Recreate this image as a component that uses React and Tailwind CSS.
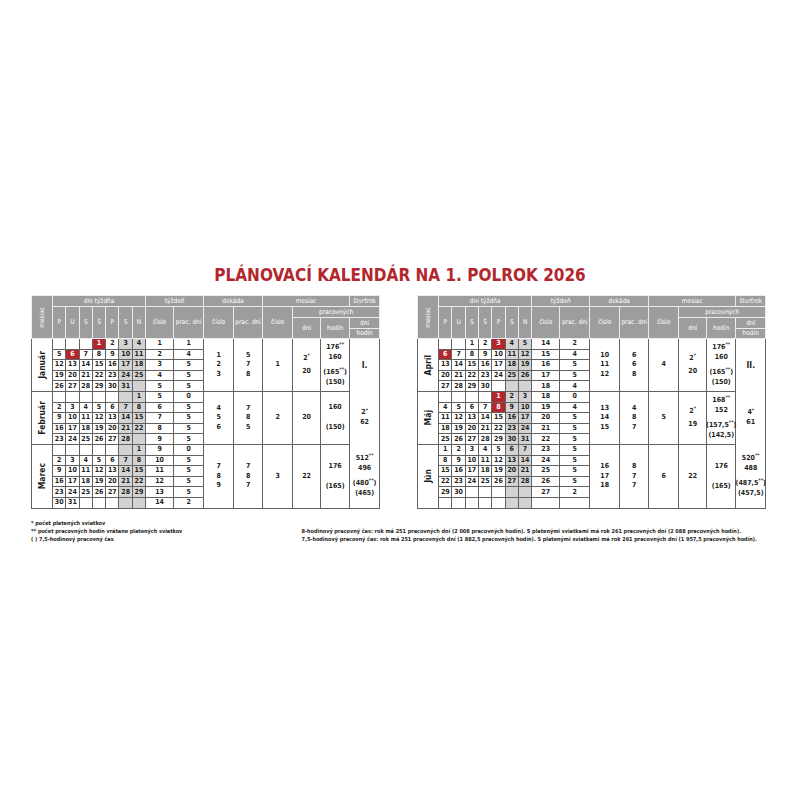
const FONT = "font-['Liberation_Sans_Narrow','DejaVu_Sans_Condensed','Liberation_Sans',sans-serif]";

const LEFT = [
  {
    name: 'Január', first: 3, days: 31, holidays: [1, 6], extra: false,
    weeks: [[1, 1], [2, 4], [3, 5], [4, 5], [5, 5]],
    dek: ['1', '2', '3'], dekDni: ['5', '7', '8'], cislo: '1',
    dni: ['2*', '20'], hodin: ['176**', '160', '', '(165**)', '(150)'], q: ['I.'], qBig: true,
  },
  {
    name: 'Február', first: 6, days: 28, holidays: [], extra: false,
    weeks: [[5, 0], [6, 5], [7, 5], [8, 5], [9, 5]],
    dek: ['4', '5', '6'], dekDni: ['7', '8', '5'], cislo: '2',
    dni: ['20'], hodin: ['160', '', '', '(150)'], q: ['2*', '62'],
  },
  {
    name: 'Marec', first: 6, days: 31, holidays: [], extra: false,
    weeks: [[9, 0], [10, 5], [11, 5], [12, 5], [13, 5], [14, 2]],
    dek: ['7', '8', '9'], dekDni: ['7', '8', '7'], cislo: '3',
    dni: ['22'], hodin: ['176', '', '', '(165)'], q: ['512**', '496', '', '(480**)', '(465)'],
  },
];

const RIGHT = [
  {
    name: 'Apríl', first: 2, days: 30, holidays: [3, 6], extra: false,
    weeks: [[14, 2], [15, 4], [16, 5], [17, 5], [18, 4]],
    dek: ['10', '11', '12'], dekDni: ['6', '6', '8'], cislo: '4',
    dni: ['2*', '20'], hodin: ['176**', '160', '', '(165**)', '(150)'], q: ['II.'], qBig: true,
  },
  {
    name: 'Máj', first: 4, days: 31, holidays: [1, 8], extra: false,
    weeks: [[18, 0], [19, 4], [20, 5], [21, 5], [22, 5]],
    dek: ['13', '14', '15'], dekDni: ['4', '8', '7'], cislo: '5',
    dni: ['2*', '19'], hodin: ['168**', '152', '', '(157,5**)', '(142,5)'], q: ['4*', '61'],
  },
  {
    name: 'Jún', first: 0, days: 30, holidays: [], extra: true,
    weeks: [[23, 5], [24, 5], [25, 5], [26, 5], [27, 2], ['', '']],
    dek: ['16', '17', '18'], dekDni: ['8', '7', '7'], cislo: '6',
    dni: ['22'], hodin: ['176', '', '', '(165)'], q: ['520**', '488', '', '(487,5**)', '(457,5)'],
  },
];

function Sup({ text }) {
  const m = text.match(/^(.*?)(\*+)(.*)$/);
  if (!m) return <>{text}</>;
  return (
    <>
      {m[1]}
      <span className="relative -top-[2.5px] text-[5px]">{m[2]}</span>
      {m[3]}
    </>
  );
}

function Lines({ items, lh = 'h-[10px]' }) {
  return (
    <div className="flex flex-col items-center">
      {items.map((t, i) =>
        t === '' ? (
          <div key={i} className="h-[5px]" />
        ) : (
          <div key={i} className={`${lh} flex items-center justify-center whitespace-nowrap`}>
            <Sup text={t} />
          </div>
        )
      )}
    </div>
  );
}

function buildRows(m) {
  const rows = [];
  let row = Array(7).fill(null);
  let col = m.first;
  for (let d = 1; d <= m.days; d++) {
    row[col] = d;
    col++;
    if (col === 7) {
      rows.push(row);
      row = Array(7).fill(null);
      col = 0;
    }
  }
  if (col > 0) rows.push(row);
  if (m.extra) rows.push(Array(7).fill(null));
  return rows;
}

const th = 'border border-[#ececec] bg-[#9d9d9d] p-0 font-normal text-white text-[6.5px] leading-none';
const td = 'border border-[#626262] p-0';

function Header() {
  return (
    <thead>
      <tr className="h-[11px]">
        <th rowSpan={4} className={th}>
          <div className="flex items-center justify-center">
            <span className="rotate-180 [writing-mode:vertical-rl]">mesiac</span>
          </div>
        </th>
        <th colSpan={7} className={th}>dni týždňa</th>
        <th colSpan={2} className={th}>týždeň</th>
        <th colSpan={2} className={th}>dekáda</th>
        <th colSpan={3} className={th}>mesiac</th>
        <th className={th}>štvrťrok</th>
      </tr>
      <tr className="h-[11px]">
        {['P', 'U', 'S', 'Š', 'P', 'S', 'N'].map((d, i) => (
          <th key={i} rowSpan={3} className={th}>{d}</th>
        ))}
        <th rowSpan={3} className={th}>číslo</th>
        <th rowSpan={3} className={th}>prac. dni</th>
        <th rowSpan={3} className={th}>číslo</th>
        <th rowSpan={3} className={th}>prac. dni</th>
        <th rowSpan={3} className={th}>číslo</th>
        <th colSpan={3} className={th}>pracovných</th>
      </tr>
      <tr className="h-[10.5px]">
        <th rowSpan={2} className={th}>dní</th>
        <th rowSpan={2} className={th}>hodín</th>
        <th className={th}>dní</th>
      </tr>
      <tr className="h-[10.5px]">
        <th className={th}>hodín</th>
      </tr>
    </thead>
  );
}

function MonthRows({ m, pos }) {
  const rows = buildRows(m);
  const n = rows.length;
  const qBorder = pos === 0 ? 'border-b-0' : pos === 1 ? 'border-y-0' : 'border-t-0';
  return rows.map((row, r) => (
    <tr key={r} className="h-[10.6px]">
      {r === 0 && (
        <td rowSpan={n} className={td}>
          <div className="flex items-center justify-center">
            <span className="rotate-180 text-[8.5px] [writing-mode:vertical-rl]">{m.name}</span>
          </div>
        </td>
      )}
      {row.map((d, c) => {
        const hol = d && m.holidays.includes(d);
        const bg = hol ? 'bg-[#b3262c] text-white' : c >= 5 ? 'bg-[#d3d3d3]' : 'bg-white';
        return (
          <td key={c} className={`${td} ${bg}`}>
            {d ?? ''}
          </td>
        );
      })}
      <td className={td}>{m.weeks[r][0]}</td>
      <td className={td}>{m.weeks[r][1]}</td>
      {r === 0 && (
        <>
          <td rowSpan={n} className={td}><Lines items={m.dek} lh="h-[9.5px]" /></td>
          <td rowSpan={n} className={td}><Lines items={m.dekDni} lh="h-[9.5px]" /></td>
          <td rowSpan={n} className={td}>{m.cislo}</td>
          <td rowSpan={n} className={td}><Lines items={m.dni} lh="h-[13px]" /></td>
          <td rowSpan={n} className={td}><Lines items={m.hodin} /></td>
          <td rowSpan={n} className={`${td} ${qBorder} ${m.qBig ? 'text-[8.5px]' : ''}`}>
            <Lines items={m.q} />
          </td>
        </>
      )}
    </tr>
  ));
}

function CalTable({ months }) {
  return (
    <table className="w-[348px] table-fixed border-collapse text-center text-[7px] font-bold leading-none text-[#1d1d1b]">
      <colgroup>
        <col className="w-[21px]" />
        {[0, 1, 2, 3, 4, 5, 6].map((i) => (
          <col key={i} className="w-[13.3px]" />
        ))}
        <col className="w-[28px]" />
        <col className="w-[30px]" />
        <col className="w-[30px]" />
        <col className="w-[29px]" />
        <col className="w-[30px]" />
        <col className="w-[28px]" />
        <col className="w-[29px]" />
        <col className="w-[30px]" />
      </colgroup>
      <Header />
      <tbody>
        {months.map((m, i) => (
          <MonthRows key={m.name} m={m} pos={i} />
        ))}
      </tbody>
    </table>
  );
}

export default function App() {
  return (
    <div className={`h-[800px] w-[800px] bg-white pt-[265px] ${FONT}`}>
      <h1 className="text-center text-[17px] font-bold leading-[21px] text-[#b3262c]">
        PLÁNOVACÍ KALENDÁR NA 1. POLROK 2026
      </h1>
      <div className="mt-[9px] flex gap-[37px] px-[31px]">
        <CalTable months={LEFT} />
        <CalTable months={RIGHT} />
      </div>
      <div className="mt-[10px] flex px-[31px] text-[5.5px] font-bold leading-[8px] text-[#1d1d1b]">
        <div>
          <div>* počet platených sviatkov</div>
          <div>** počet pracovných hodín vrátane platených sviatkov</div>
          <div>( ) 7,5-hodinový pracovný čas</div>
        </div>
        <div className="ml-auto mr-[12px] pt-[8px]">
          <div>8-hodinový pracovný čas: rok má 251 pracovných dní (2 008 pracovných hodín). S platenými sviatkami má rok 261 pracovných dní (2 088 pracovných hodín).</div>
          <div>7,5-hodinový pracovný čas: rok má 251 pracovných dní (1 882,5 pracovných hodín). S platenými sviatkami má rok 261 pracovných dní (1 957,5 pracovných hodín).</div>
        </div>
      </div>
    </div>
  );
}
